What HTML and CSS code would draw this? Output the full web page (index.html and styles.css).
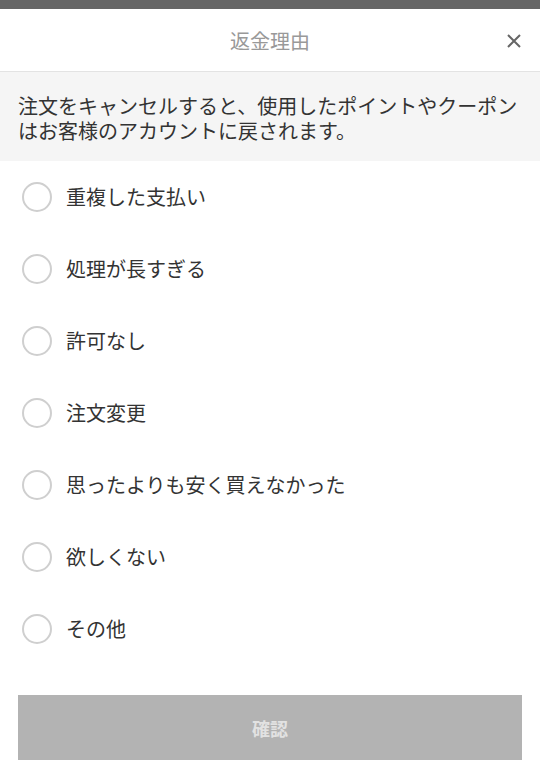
FILE: index.html
```html
<!DOCTYPE html>
<html lang="ja">
<head>
<meta charset="utf-8">
<link rel="stylesheet" href="styles.css">
</head>
<body>
<div class="topbar"></div>
<div class="sheet">
  <header class="header">
    <span class="title">返金理由</span>
    <button class="close" aria-label="閉じる">
      <svg width="14" height="14" viewBox="0 0 14 14"><path d="M1 1L13 13M13 1L1 13" stroke="#666" stroke-width="2" fill="none"/></svg>
    </button>
  </header>
  <div class="notice">注文をキャンセルすると、使用したポイントやクーポンはお客様のアカウントに戻されます。</div>
  <ul class="reasons">
    <li class="reason"><span class="radio"></span><span class="label">重複した支払い</span></li>
    <li class="reason"><span class="radio"></span><span class="label">処理が長すぎる</span></li>
    <li class="reason"><span class="radio"></span><span class="label">許可なし</span></li>
    <li class="reason"><span class="radio"></span><span class="label">注文変更</span></li>
    <li class="reason"><span class="radio"></span><span class="label">思ったよりも安く買えなかった</span></li>
    <li class="reason"><span class="radio"></span><span class="label">欲しくない</span></li>
    <li class="reason"><span class="radio"></span><span class="label">その他</span></li>
  </ul>
  <div class="actions">
    <button class="confirm">確認</button>
  </div>
</div>
</body>
</html>
```

FILE: styles.css
```css
* { box-sizing: border-box; }
html, body { margin: 0; padding: 0; }
body {
  width: 540px;
  height: 768px;
  background: #fff;
  font-family: "Noto Sans CJK JP", "Noto Sans", sans-serif;
  color: #333;
  overflow: hidden;
}
.topbar {
  height: 9px;
  background: #666;
}
.header {
  position: relative;
  height: 63px;
  display: flex;
  align-items: center;
  justify-content: center;
  border-bottom: 1px solid #e3e3e3;
}
.title {
  font-size: 20px;
  color: #999;
  line-height: 1;
  margin-top: 2px;
}
.close {
  position: absolute;
  right: 19px;
  top: 25px;
  width: 14px;
  height: 14px;
  padding: 0;
  border: 0;
  background: none;
  display: flex;
}
.notice {
  background: #f5f5f5;
  padding: 21px 18px 18px;
  font-size: 20px;
  line-height: 25px;
  color: #333;
}
.reasons {
  list-style: none;
  margin: 0;
  padding: 0;
}
.reason {
  height: 72px;
  display: flex;
  align-items: center;
  padding-left: 22px;
  gap: 14px;
}
.radio {
  width: 30px;
  height: 30px;
  border-radius: 50%;
  border: 2px solid #cfcfcf;
  flex: none;
}
.label {
  font-size: 20px;
  color: #333;
  line-height: 1;
}
.actions {
  padding: 30px 18px 0;
}
.confirm {
  width: 100%;
  height: 65px;
  border: 0;
  background: #b3b3b3;
  color: #e2e2e2;
  font-family: "Noto Sans CJK JP", "Noto Sans", sans-serif;
  font-size: 18px;
  font-weight: 700;
}
```
